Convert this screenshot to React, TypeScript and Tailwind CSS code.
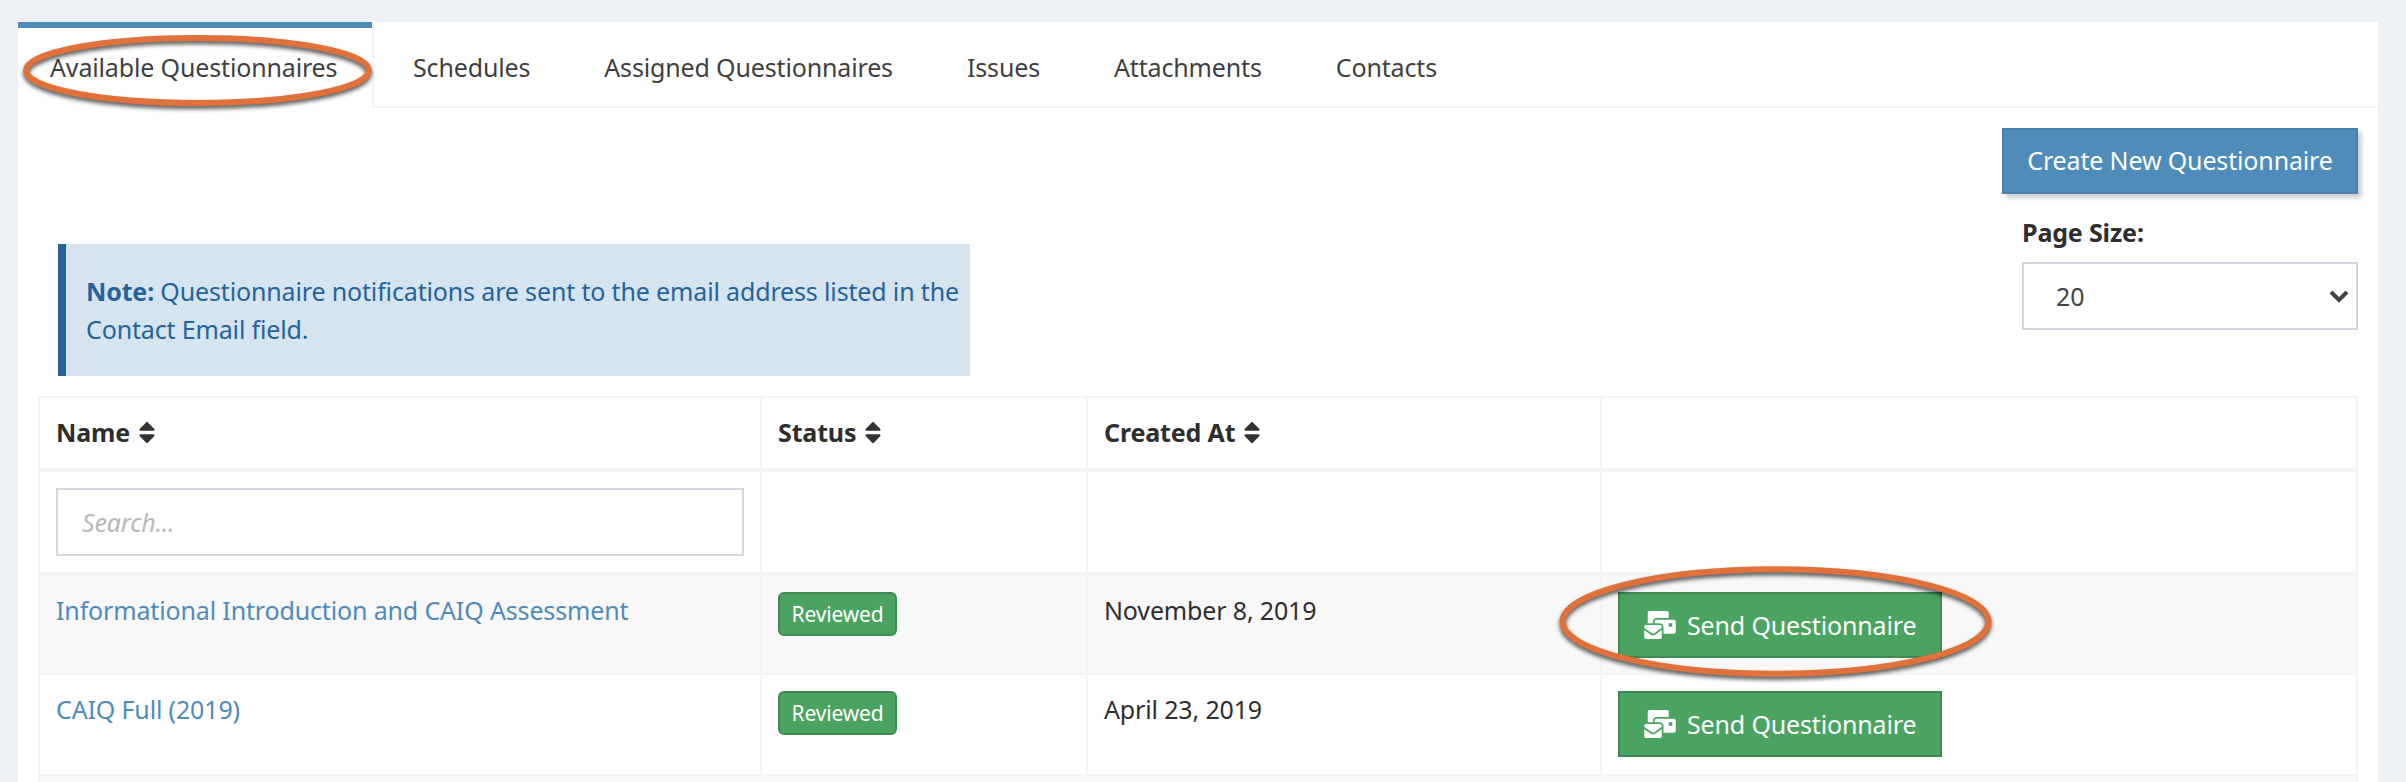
import React from "react";
import { FaMailBulk, FaSort } from "react-icons/fa";

function Ring({ className }: { className: string }) {
  return (
    <svg
      className={`absolute pointer-events-none overflow-visible drop-shadow-[0_3px_2px_rgba(0,0,0,0.65)] ${className}`}
      viewBox="0 0 100 100"
      preserveAspectRatio="none"
    >
      <ellipse cx="50" cy="50" rx="49.4" ry="47" fill="none" stroke="#e0713a" strokeWidth="6" vectorEffect="non-scaling-stroke" />
    </svg>
  );
}

function SendButton() {
  return (
    <button className="flex h-[66px] w-[324px] items-center border-2 border-[#3e8a53] bg-[#4aa361] pl-[24px] text-white">
      <FaMailBulk className="h-[28px] w-[32px] shrink-0" />
      <span className="ml-[11px]">Send Questionnaire</span>
    </button>
  );
}

function Badge() {
  return (
    <span className="flex h-[44px] w-[119px] items-center justify-center rounded-[6px] border-2 border-[#3e8a53] bg-[#4aa361] text-[21px] text-white">
      Reviewed
    </span>
  );
}

function Head({ label }: { label: string }) {
  return (
    <th className="border-2 border-b-4 border-[#f3f4f6] px-[16px] pt-[16px] pb-[18px] text-left align-top font-bold text-[#2e2e2e]">
      {label ? (
        <span className="flex h-[36px] items-center">
          {label}
          <FaSort className="ml-[8px] h-[27px] w-[18px] text-[#333333]" />
        </span>
      ) : (
        <span className="block h-[36px]" />
      )}
    </th>
  );
}

const tabs = ["Schedules", "Assigned Questionnaires", "Issues", "Attachments", "Contacts"];
const cell = "border-2 border-[#f3f4f6] px-[16px] pt-[16px] pb-[15px] align-top";
const lastCell = "border-2 border-[#f3f4f6] px-[16px] pt-[16px] pb-[17px] align-top";

const rows = [
  { name: "Informational Introduction and CAIQ Assessment", date: "November 8, 2019", ring: true, cls: cell, bg: "bg-[#f8f8f8]" },
  { name: "CAIQ Full (2019)", date: "April 23, 2019", ring: false, cls: lastCell, bg: "bg-white" },
];

export default function App() {
  return (
    <div className="h-[782px] overflow-hidden bg-[#edf0f5] pt-[22px] pr-[28px] pl-[18px] font-['Noto_Sans','Open_Sans',sans-serif] text-[25px] leading-[36px] tracking-[-0.15px] text-[#2e2e2e]">
      <div className="h-[760px] bg-white">
        <div className="flex h-[86px] border-b-2 border-[#f3f4f6]">
          <div className="relative -mb-[2px] h-[86px] w-[354px] shrink-0 border-t-[6px] border-[#4f8bb9] bg-white pt-[21px] pl-[32px] text-[#3f3f3f]">
            Available Questionnaires
            <Ring className="left-[6px] top-[8px] h-[69px] w-[347px]" />
          </div>
          <div className="flex border-l-2 border-[#f3f4f6] pl-[2px] text-[#3f3f3f]">
            {tabs.map((t) => (
              <div key={t} className="px-[37px] pt-[27px]">
                {t}
              </div>
            ))}
          </div>
        </div>

        <div className="flex items-start justify-between pr-[20px] pl-[40px]">
          <div className="mt-[136px] h-[132px] w-[912px] border-l-[8px] border-[#24639c] bg-[#d6e4ef] pt-[28px] pl-[20px] leading-[38px] whitespace-nowrap text-[#24639c]">
            <strong className="font-bold">Note:</strong> Questionnaire notifications are sent to the email address listed in the
            <br />
            Contact Email field.
          </div>
          <div className="flex flex-col items-end pt-[20px]">
            <button className="h-[66px] w-[356px] border-2 border-[#4a7fa9] bg-[#4f8cb9] pb-[2px] text-white shadow-[4px_4px_4px_rgba(60,70,90,0.25)]">
              Create New Questionnaire
            </button>
            <div className="mt-[20px] w-[336px]">
              <div className="font-bold">Page Size:</div>
              <div className="mt-[12px] flex h-[68px] items-center justify-between border-2 border-[#d2d6df] bg-white pr-[7px] pl-[32px] text-[#444444]">
                20
                <svg width="20" height="14" viewBox="0 0 20 14" fill="none" stroke="#444444" strokeWidth="4">
                  <path d="M2 3l8 8 8-8" />
                </svg>
              </div>
            </div>
          </div>
        </div>

        <table className="mt-[20px] ml-[20px] w-[2320px] table-fixed border-collapse">
          <colgroup>
            <col className="w-[722px]" />
            <col className="w-[326px]" />
            <col className="w-[514px]" />
            <col />
          </colgroup>
          <thead>
            <tr>
              <Head label="Name" />
              <Head label="Status" />
              <Head label="Created At" />
              <Head label="" />
            </tr>
            <tr>
              <td className="border-2 border-b-4 border-[#f3f4f6] px-[16px] pt-[16px] pb-[16px]">
                <input
                  placeholder="Search..."
                  className="block h-[68px] w-full border-2 border-[#d3d9e0] pl-[24px] italic outline-none placeholder:text-[#b8b8b8]"
                />
              </td>
              <td className="border-2 border-b-4 border-[#f3f4f6]" />
              <td className="border-2 border-b-4 border-[#f3f4f6]" />
              <td className="border-2 border-b-4 border-[#f3f4f6]" />
            </tr>
          </thead>
          <tbody>
            {rows.map((r) => (
              <tr key={r.name} className={r.bg}>
                <td className={r.cls}>
                  <a className="text-[#4f8bb9]">{r.name}</a>
                </td>
                <td className={r.cls}>
                  <Badge />
                </td>
                <td className={r.cls}>{r.date}</td>
                <td className={r.cls}>
                  <div className="relative">
                    <SendButton />
                    {r.ring && <Ring className="-left-[58px] -top-[26px] h-[111px] w-[431px]" />}
                  </div>
                </td>
              </tr>
            ))}
            <tr className="bg-[#f8f8f8]">
              <td className={cell} colSpan={4}>
                <div className="h-[36px]" />
              </td>
            </tr>
          </tbody>
        </table>
      </div>
    </div>
  );
}
